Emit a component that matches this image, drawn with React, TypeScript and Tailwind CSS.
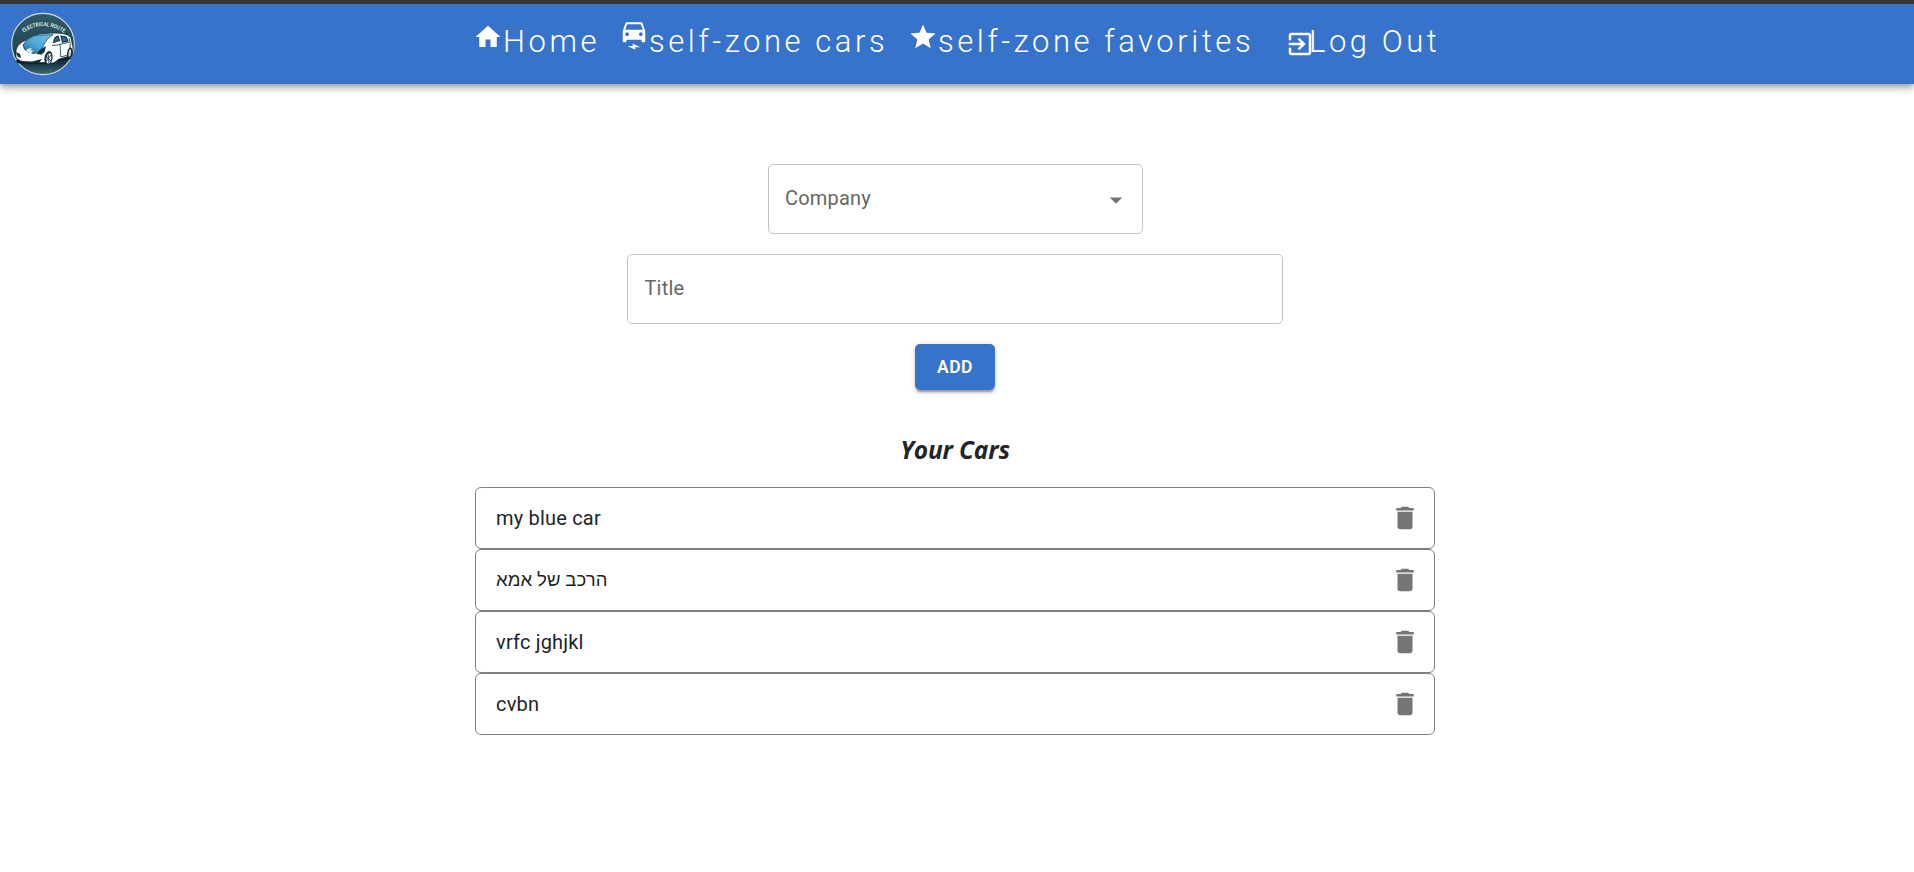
import type { ReactNode } from "react";

const paths = {
  home: "M10 20v-6h4v6h5v-8h3L12 3 2 12h3v8z",
  car: "M18.92 2.01C18.72 1.42 18.16 1 17.5 1h-11c-.66 0-1.21.42-1.42 1.01L3 8v8c0 .55.45 1 1 1h1c.55 0 1-.45 1-1v-1h12v1c0 .55.45 1 1 1h1c.55 0 1-.45 1-1V8l-2.08-5.99zM6.5 12c-.83 0-1.5-.67-1.5-1.5S5.67 9 6.5 9 8 9.67 8 10.500 7.330 12 6.500 12zm11 0c-.83 0-1.500-.67-1.500-1.500s.67-1.500 1.500-1.500 1.500.67 1.500 1.500-.67 1.500-1.500 1.500zM5 7l1.500-4.500h11L19 7H5zM7 20h4v-2l6 3h-4v2z",
  star: "M12 17.27 18.18 21l-1.64-7.03L22 9.24l-7.19-.61L12 2 9.190 8.630 2 9.240l5.460 4.730L5.820 21z",
  exit: "M10.090 15.590 11.500 17l5-5-5-5-1.410 1.410L12.670 11H3v2h9.670l-2.580 2.590zM19 3H5c-1.110 0-2 .9-2 2v4h2V5h14v14H5v-4H3v4c0 1.100.89 2 2 2h14c1.100 0 2-.9 2-2V5c0-1.100-.9-2-2-2z",
  trash: "M6 19c0 1.100.9 2 2 2h8c1.100 0 2-.9 2-2V7H6v12zM19 4h-3.500l-1-1h-5l-1 1H5v2h14V4z",
  caret: "m7 10 5 5 5-5z",
};

function Icon({ d, className = "" }: { d: string; className?: string }) {
  return (
    <svg viewBox="0 0 24 24" fill="currentColor" className={`size-[30px] shrink-0 ${className}`}>
      <path d={d} />
    </svg>
  );
}

function Logo() {
  return (
    <svg viewBox="0 0 64 64" className="size-16 shrink-0">
      <defs>
        <linearGradient id="disc" x1="0" y1="0" x2="0" y2="1">
          <stop offset="0" stopColor="#2f5b68" />
          <stop offset="0.5" stopColor="#234a58" />
          <stop offset="0.82" stopColor="#173645" />
          <stop offset="1" stopColor="#3f6a75" />
        </linearGradient>
        <linearGradient id="glass" x1="1" y1="0" x2="0" y2="1">
          <stop offset="0" stopColor="#6fc0e8" />
          <stop offset="0.55" stopColor="#4ba9dc" />
          <stop offset="1" stopColor="#1f618c" />
        </linearGradient>
        <path id="arc" d="M12.500 20.500Q32 7.500 52 20.500" />
      </defs>
      <ellipse cx="32" cy="32" rx="31.300" ry="30.600" fill="url(#disc)" stroke="#d5dcd2" strokeWidth="1.100" />
      <text fill="#dfe8e8" fontSize="5.500" fontWeight="700" fontFamily="Roboto, sans-serif">
        <textPath href="#arc" textLength="43" lengthAdjust="spacingAndGlyphs">ELECTRICAL ROUTE</textPath>
      </text>
      <path d="M6 51q24 4 54-4l1-4-22 3-34 2z" fill="#0b202d" />
      <path
        d="M5 38q1-5 6-8l4-2q6-5 13-6 11-1.500 22-.8 7 .8 10 4.300l2 10-.5 8q-2 3-4.500 1l-10 3q-4 5-9 3l-22 .5q-8-2-11-5z"
        fill="#fafcfb"
        stroke="#0c2431"
        strokeWidth="0.800"
      />
      <path d="M12 33q2-4 7-7 5-3 10-3l13-.4q-7 4-9 10-2 5-6 7l-4 2-5-1q-6-3-6-7.600z" fill="url(#glass)" stroke="#103447" strokeWidth="0.700" />
      <path d="m43 28.500q1-4 4-4.500l1.500 4.500-6 2zM50 24l5 1 2 4-5.500 1z" fill="#286e8f" stroke="#102b39" strokeWidth="1.100" />
      <path d="M41 33.500q6 0 11-2l6-1M58 26q2 6 1 10M49 32l.8 13 7-2" fill="none" stroke="#173443" strokeWidth="0.800" />
      <path d="m16 37 5-1-1.500 2.500 3 0-5 5.500.5-4-3 0z" fill="#e5f3f7" />
      <path d="m25 42 5-5 5-3-1.500 6-3 2.500zM5 40l4 2 1 4-3-1zM10 49l11 .6 10-2.600-3 4-13 0z" fill="#122f3d" />
      <ellipse cx="37.500" cy="46" rx="4" ry="7" fill="#102a37" transform="rotate(9 37.500 46)" />
      <ellipse cx="37.800" cy="46.500" rx="2.400" ry="5.300" fill="#dae3e4" transform="rotate(9 37.800 46.500)" />
      <path d="m37 41 1 11m-3-8 5 5m0-6-5 6" stroke="#18313e" strokeWidth="0.800" />
      <ellipse cx="58.800" cy="41" rx="2.700" ry="5.500" fill="#112b38" transform="rotate(8 58.800 41)" />
      <ellipse cx="58.800" cy="41" rx="1.300" ry="3.700" fill="#c7d2d5" transform="rotate(8 58.800 41)" />
    </svg>
  );
}

function NavItem({ icon, children, className, iconClass = "" }: { icon: string; children: ReactNode; className: string; iconClass?: string }) {
  return (
    <a className={`flex items-start whitespace-nowrap ${className}`}>
      <Icon d={icon} className={iconClass} />
      <span className="mt-[4px] leading-[36px]">{children}</span>
    </a>
  );
}

const cars = [
  { name: "my blue car", text: "tracking-[0.188px]" },
  { name: "הרכב של אמא", text: "pt-[2px] text-[18.500px] tracking-[0.120px]" },
  { name: "vrfc jghjkl", text: "tracking-[0.188px]" },
  { name: "cvbn", text: "tracking-[0.188px]" },
];

export default function App() {
  return (
    <div className="h-[872px] w-full overflow-hidden bg-white font-['Roboto','Liberation_Sans',sans-serif] text-xl text-[#212529]">
      <header className="flex h-[84px] items-start border-t-4 border-[#363636] bg-[#3873cb] pt-[8px] pl-[11px] text-white shadow-[0_2.5px_5px_-1.250px_rgba(0,0,0,0.25),0_5px_6.250px_rgba(0,0,0,0.18),0_1.250px_12.500px_rgba(0,0,0,0.14)]">
        <Logo />
        <nav className="ml-[398px] flex pt-[8px] text-[31px] font-light tracking-[3.560px]">
          <NavItem icon={paths.home} className="w-[146px]" iconClass="mt-[2px]">Home</NavItem>
          <NavItem icon={paths.car} className="w-[289px]" iconClass="mt-[1px]">self-zone cars</NavItem>
          <NavItem icon={paths.star} className="w-[377px]" iconClass="mt-[2px]">self-zone favorites</NavItem>
          <NavItem icon={paths.exit} className="" iconClass="mt-[9px] -mr-[6px]">Log Out</NavItem>
        </nav>
      </header>

      <main className="flex w-[1910px] flex-col items-center pt-[80px]">
        <div className="flex h-[70px] w-[375px] items-center justify-between rounded-[5px] border border-[#c4c4c4] pr-[11px] pl-[16.500px] tracking-[0.188px] text-[#666]">
          <span className="-mt-[2px]">Company</span>
          <Icon d={paths.caret} className="mt-px text-[#757575]" />
        </div>
        <div className="mt-5 flex h-[70px] w-[656px] items-center rounded-[5px] border border-[#c4c4c4] px-[16.500px] tracking-[0.188px] text-[#666]">
          <span className="-mt-[2px]">Title</span>
        </div>
        <button className="mt-5 h-[46px] w-20 rounded-[5px] bg-[#3873cb] text-[17.500px] font-semibold tracking-[0.500px] text-white shadow-[0_3.750px_1.250px_-2.500px_rgba(0,0,0,0.2),0_2.500px_2.500px_rgba(0,0,0,0.14),0_1.250px_6.250px_rgba(0,0,0,0.12)]">
          ADD
        </button>
        <h2 className="mt-[44px] h-[53px] font-['Open_Sans',sans-serif] text-[24.500px] leading-[32px] font-bold tracking-[-0.150px] italic">Your Cars</h2>
        <ul className="w-[960px]">
          {cars.map((car) => (
            <li key={car.name} className="flex h-[62px] items-center justify-between rounded-[6px] border border-[#808080] pr-[14px] pl-5">
              <span className={car.text}>{car.name}</span>
              <Icon d={paths.trash} className="text-[#757575]" />
            </li>
          ))}
        </ul>
      </main>
    </div>
  );
}
